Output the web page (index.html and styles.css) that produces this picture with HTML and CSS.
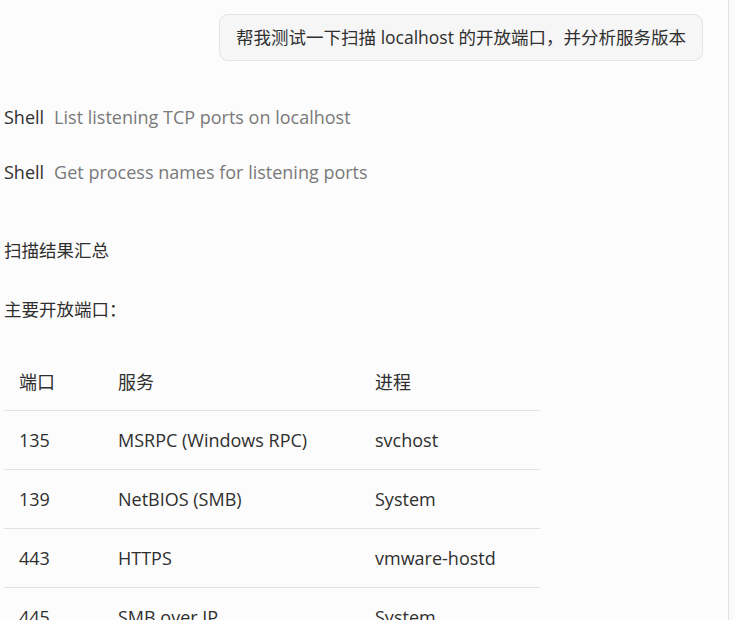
FILE: index.html
```html
<!DOCTYPE html>
<html lang="zh-CN">
<head>
<meta charset="utf-8">
<title>Chat</title>
<link rel="stylesheet" href="styles.css">
</head>
<body>
<div class="app">
  <main class="pane">
    <div class="user-row">
      <div class="bubble">帮我测试一下扫描 localhost 的开放端口，并分析服务版本</div>
    </div>
    <div class="tool tool-first"><span class="tool-name">Shell</span><span class="tool-desc">List listening TCP ports on localhost</span></div>
    <div class="tool"><span class="tool-name">Shell</span><span class="tool-desc">Get process names for listening ports</span></div>
    <p class="heading">扫描结果汇总</p>
    <p class="para">主要开放端口：</p>
    <table class="ports">
      <thead>
        <tr><th class="c1">端口</th><th class="c2">服务</th><th class="c3">进程</th></tr>
      </thead>
      <tbody>
        <tr><td>135</td><td>MSRPC (Windows RPC)</td><td>svchost</td></tr>
        <tr><td>139</td><td>NetBIOS (SMB)</td><td>System</td></tr>
        <tr><td>443</td><td>HTTPS</td><td>vmware-hostd</td></tr>
        <tr><td>445</td><td>SMB over IP</td><td>System</td></tr>
      </tbody>
    </table>
  </main>
</div>
</body>
</html>
```
FILE: styles.css
```css
html, body {
  margin: 0;
  padding: 0;
  height: 100%;
  overflow: hidden;
  background: #fafafa;
}
body {
  font-family: "Open Sans", "Noto Sans CJK SC", sans-serif;
  color: #2f2f2f;
  font-size: 18px;
}
.app {
  display: flex;
  height: 100%;
}
.pane {
  width: 729px;
  border-right: 1px solid #e2e2e2;
  background: #fcfcfc;
  padding: 14px 0 0 4px;
  box-sizing: border-box;
}
.user-row {
  display: flex;
  justify-content: flex-end;
  padding-right: 25px;
}
.bubble {
  background: #f6f6f6;
  border: 1px solid #e3e3e3;
  border-radius: 9px;
  padding: 0 16px;
  height: 45px;
  line-height: 45px;
  font-size: 17.5px;
  color: #2f2f2f;
}
.tool {
  height: 30px;
  line-height: 30px;
  font-size: 18px;
  margin-top: 25px;
}
.tool-first {
  margin-top: 41px;
}
.tool-name {
  color: #2f2f2f;
  margin-right: 10px;
}
.tool-desc {
  color: #7a7a7a;
}
.heading {
  margin: 48px 0 0;
  line-height: 30px;
  font-size: 17.5px;
}
.para {
  margin: 29px 0 0;
  line-height: 30px;
  font-size: 17.5px;
}
.ports {
  margin-top: 28px;
  border-collapse: collapse;
  width: 536px;
  font-size: 18px;
}
.ports th, .ports td {
  text-align: left;
  font-weight: normal;
  padding: 0 15px;
  height: 58px;
  color: #2f2f2f;
}
.ports tbody td {
  border-top: 1px solid #e2e2e2;
}
.ports .c1 { width: 69px; }
.ports .c2 { width: 227px; }
```
